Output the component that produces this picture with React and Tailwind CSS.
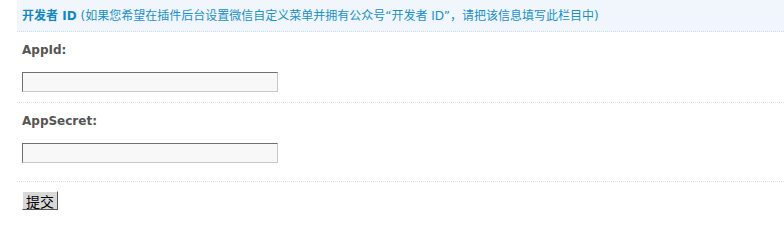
export default function App() {
  return (
    <div className="w-[784px] h-[228px] bg-white pl-[17px] text-[12px] font-['DejaVu_Sans','Noto_Sans_CJK_SC',sans-serif]">
      <div className="h-[32px] bg-[#f0f6fc] border-b border-dotted border-[#c9dcec] pl-[5px] flex items-center text-[#1a90c8]">
        <span className="font-bold text-[#1388c0]">开发者 ID</span>
        <span className="ml-[4px]">(如果您希望在插件后台设置微信自定义菜单并拥有公众号“开发者 ID”，请把该信息填写此栏目中)</span>
      </div>

      <div className="pl-[5px] pt-[10px] pb-[10px] border-b border-dotted border-[#d6e3ee]">
        <label className="block h-[16px] leading-[16px] font-bold text-[#555]">AppId:</label>
        <input
          type="text"
          className="block mt-[14px] w-[256px] h-[20px] bg-[#f8f8f8] border border-t-[#707070] border-l-[#707070] border-r-[#c8c8c8] border-b-[#c8c8c8] outline-none"
        />
      </div>

      <div className="pl-[5px] pt-[10px] pb-[18px] border-b border-dotted border-[#d6e3ee]">
        <label className="block h-[16px] leading-[16px] font-bold text-[#555]">AppSecret:</label>
        <input
          type="text"
          className="block mt-[14px] w-[256px] h-[20px] bg-[#f8f8f8] border border-t-[#707070] border-l-[#707070] border-r-[#c8c8c8] border-b-[#c8c8c8] outline-none"
        />
      </div>

      <div className="pl-[5px] pt-[9px]">
        <button
          type="button"
          className="h-[19px] w-[36px] bg-[#d8d8d8] border border-t-white border-l-white border-r-[#555] border-b-[#555] text-black text-[14px] leading-[16px] font-['Noto_Sans_CJK_SC',sans-serif]"
        >
          提交
        </button>
      </div>
    </div>
  );
}
